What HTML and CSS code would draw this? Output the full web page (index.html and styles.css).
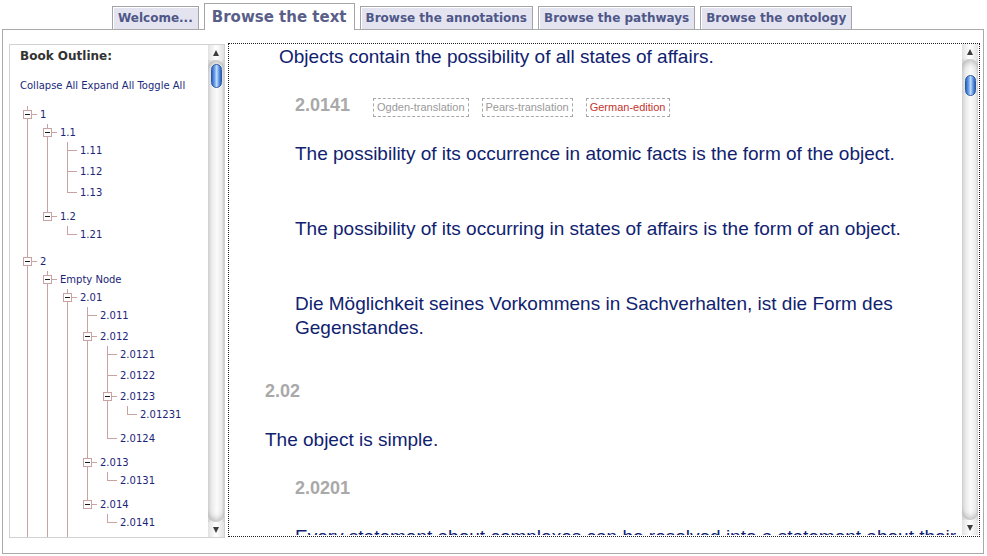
FILE: index.html
```html
<!DOCTYPE html>
<html lang="en">
<head>
<meta charset="utf-8">
<title>Browse the text</title>
<link rel="stylesheet" href="styles.css">
</head>
<body>
<nav class="tabs">
  <a class="tab">Welcome...</a>
  <a class="tab tab-active">Browse the text</a>
  <a class="tab">Browse the annotations</a>
  <a class="tab">Browse the pathways</a>
  <a class="tab">Browse the ontology</a>
</nav>
<main class="frame">
  <aside class="outline">
    <div class="outline-body">
      <div class="outline-title">Book Outline:</div>
      <div class="outline-links"><a>Collapse All</a> <a>Expand All</a> <a>Toggle All</a></div>
      <ul class="tree">
        <li>
          <div class="row"><span class="conn"><span class="toggle"></span></span><a class="label">1</a></div>
          <ul>
            <li>
              <div class="row"><span class="conn"><span class="toggle"></span></span><a class="label">1.1</a></div>
              <ul>
                <li><div class="row"><span class="conn"></span><a class="label">1.11</a></div></li>
                <li><div class="row"><span class="conn"></span><a class="label">1.12</a></div></li>
                <li class="last"><div class="row"><span class="conn"></span><a class="label">1.13</a></div></li>
              </ul>
            </li>
            <li class="last">
              <div class="row"><span class="conn"><span class="toggle"></span></span><a class="label">1.2</a></div>
              <ul>
                <li class="last"><div class="row"><span class="conn"></span><a class="label">1.21</a></div></li>
              </ul>
            </li>
          </ul>
        </li>
        <li>
          <div class="row"><span class="conn"><span class="toggle"></span></span><a class="label">2</a></div>
          <ul>
            <li>
              <div class="row"><span class="conn"><span class="toggle"></span></span><a class="label">Empty Node</a></div>
              <ul>
                <li>
                  <div class="row"><span class="conn"><span class="toggle"></span></span><a class="label">2.01</a></div>
                  <ul>
                    <li><div class="row"><span class="conn"></span><a class="label">2.011</a></div></li>
                    <li>
                      <div class="row"><span class="conn"><span class="toggle"></span></span><a class="label">2.012</a></div>
                      <ul>
                        <li><div class="row"><span class="conn"></span><a class="label">2.0121</a></div></li>
                        <li><div class="row"><span class="conn"></span><a class="label">2.0122</a></div></li>
                        <li>
                          <div class="row"><span class="conn"><span class="toggle"></span></span><a class="label">2.0123</a></div>
                          <ul>
                            <li class="last"><div class="row"><span class="conn"></span><a class="label">2.01231</a></div></li>
                          </ul>
                        </li>
                        <li class="last"><div class="row"><span class="conn"></span><a class="label">2.0124</a></div></li>
                      </ul>
                    </li>
                    <li>
                      <div class="row"><span class="conn"><span class="toggle"></span></span><a class="label">2.013</a></div>
                      <ul>
                        <li class="last"><div class="row"><span class="conn"></span><a class="label">2.0131</a></div></li>
                      </ul>
                    </li>
                    <li class="last">
                      <div class="row"><span class="conn"><span class="toggle"></span></span><a class="label">2.014</a></div>
                      <ul>
                        <li class="last"><div class="row"><span class="conn"></span><a class="label">2.0141</a></div></li>
                      </ul>
                    </li>
                  </ul>
                </li>
              </ul>
            </li>
          </ul>
        </li>
      </ul>
    </div>
    <div class="vscroll">
      <div class="sb-btn sb-up"></div>
      <div class="sb-track"><div class="sb-thumb"></div></div>
      <div class="sb-btn sb-down"></div>
    </div>
  </aside>
  <section class="reader">
    <div class="reader-body">
      <p class="txt cont">Objects contain the possibility of all states of affairs.</p>
      <div class="prop sub has-tr">
        <div class="prop-head">
          <span class="num">2.0141</span>
          <span class="tag">Ogden-translation</span>
          <span class="tag">Pears-translation</span>
          <span class="tag tag-de">German-edition</span>
        </div>
        <p class="txt tr">The possibility of its occurrence in atomic facts is the form of the object.</p>
        <p class="txt tr">The possibility of its occurring in states of affairs is the form of an object.</p>
        <p class="txt tr">Die Möglichkeit seines Vorkommens in Sachverhalten, ist die Form des Gegenstandes.</p>
      </div>
      <div class="prop">
        <div class="prop-head"><span class="num">2.02</span></div>
        <p class="txt">The object is simple.</p>
      </div>
      <div class="prop sub">
        <div class="prop-head"><span class="num">2.0201</span></div>
        <p class="txt">Every statement about complexes can be resolved into a statement about their constituents.</p>
      </div>
    </div>
    <div class="vscroll vscroll-reader">
      <div class="sb-btn sb-up"></div>
      <div class="sb-track"><div class="sb-thumb"></div></div>
      <div class="sb-btn sb-down"></div>
    </div>
  </section>
</main>
</body>
</html>
```

FILE: styles.css
```css
html, body {
  margin: 0;
  padding: 0;
  background: #ffffff;
}

body {
  width: 987px;
  height: 556px;
  overflow: hidden;
  font-family: "DejaVu Sans", Verdana, sans-serif;
}

a {
  text-decoration: none;
  cursor: pointer;
}

/* ---------- tabs ---------- */
.tabs {
  position: relative;
  z-index: 1;
  display: flex;
  align-items: flex-end;
  height: 30px;
  padding-left: 112px;
}

.tab {
  display: flex;
  align-items: center;
  height: 23px;
  box-sizing: border-box;
  margin: 0 5px 1px 0;
  padding: 0 5px;
  border: 1px solid #a4a4a8;
  border-bottom: none;
  background: #e3e4ef;
  box-shadow: inset 1px 1px 0 #ffffff;
  color: #4f5789;
  font-weight: bold;
  font-size: 12px;
  white-space: nowrap;
}

.tab-active {
  height: 27px;
  margin-bottom: 0;
  padding: 0 7px 1px;
  background: #ffffff;
  box-shadow: none;
  color: #5a5f89;
  font-size: 15px;
}

/* ---------- frame ---------- */
.frame {
  display: flex;
  align-items: flex-start;
  box-sizing: border-box;
  width: 982px;
  height: 525px;
  margin: -1px 0 0 2px;
  padding: 13px 3px 0 6px;
  border: 1px solid #a9a9a9;
  background: #ffffff;
}

/* ---------- outline panel ---------- */
.outline {
  display: flex;
  box-sizing: border-box;
  width: 216px;
  height: 494px;
  margin-top: 1px;
  border: 1px solid #d2d2d2;
  background: #ffffff;
}

.outline-body {
  flex: 1;
  min-width: 0;
  overflow: hidden;
  padding-left: 8px;
}

.outline-title {
  margin-top: 3px;
  padding-left: 2px;
  font-size: 12px;
  line-height: 16px;
  font-weight: bold;
  color: #333333;
}

.outline-links {
  margin-top: 15px;
  padding-left: 2px;
  font-size: 10px;
  line-height: 14px;
  color: #1b2a7c;
  white-space: nowrap;
}

/* ---------- tree ---------- */
.tree,
.tree ul {
  list-style: none;
  margin: 0;
  padding: 0;
}

.tree {
  margin-top: 13px;
}

.tree ul {
  margin-left: 20px;
}

.tree li {
  padding-bottom: 3px;
  background: linear-gradient(#cba2a2, #cba2a2) 9px 0 / 1px 100% no-repeat;
}

.tree li.last {
  background-size: 1px 9px;
}

.row {
  display: flex;
  align-items: center;
  height: 18px;
}

.conn {
  flex: none;
  display: flex;
  align-items: flex-start;
  box-sizing: border-box;
  width: 20px;
  height: 18px;
  padding: 4px 0 0 5px;
  background: linear-gradient(#cba2a2, #cba2a2) 9px 8px / 10px 1px no-repeat;
}

.toggle {
  display: flex;
  align-items: center;
  justify-content: center;
  box-sizing: border-box;
  width: 9px;
  height: 9px;
  border: 1px solid #cba2a2;
  background: #ffffff;
}

.toggle::after {
  content: "";
  width: 5px;
  height: 1px;
  background: #1a1a1a;
}

.label {
  padding-left: 2px;
  font-size: 10px;
  line-height: 18px;
  color: #1c2578;
  white-space: nowrap;
}

/* ---------- scrollbars ---------- */
.vscroll {
  flex: none;
  display: flex;
  flex-direction: column;
  width: 16px;
  background: linear-gradient(to right, #d0d0d0, #ececec 25%, #fbfbfb 55%, #ececec 85%, #cfcfcf);
}

.sb-btn {
  flex: none;
  display: flex;
  align-items: center;
  justify-content: center;
  height: 15px;
  background: linear-gradient(to right, #e2e2e2, #ffffff 50%, #e2e2e2);
}

.sb-up::after {
  content: "";
  border-left: 3px solid transparent;
  border-right: 3px solid transparent;
  border-bottom: 6px solid #3d3d3d;
}

.sb-down::after {
  content: "";
  border-left: 3px solid transparent;
  border-right: 3px solid transparent;
  border-top: 6px solid #3d3d3d;
}

.sb-track {
  flex: 1;
  padding-top: 4px;
  border-radius: 8px;
  box-shadow: inset 0 9px 6px -6px rgba(0, 0, 0, 0.22), inset 0 -9px 6px -6px rgba(0, 0, 0, 0.22);
}

.sb-thumb {
  box-sizing: border-box;
  width: 11px;
  height: 24px;
  margin: 0 auto;
  border: 1px solid #2d5aa6;
  border-radius: 6px;
  background: linear-gradient(to right, #2f64c2, #6ea4ea 30%, #c2defc 52%, #5d93e0 78%, #2e5fb6);
}

.vscroll-reader .sb-track {
  padding-top: 16px;
}

.vscroll-reader .sb-thumb {
  height: 21px;
}

/* ---------- reader ---------- */
.reader {
  display: flex;
  box-sizing: border-box;
  flex: 1;
  height: 494px;
  margin-left: 3px;
  border: 1px dotted #222222;
  padding: 0 1px 1px 0;
  background: #ffffff;
}

.reader-body {
  flex: 1;
  min-width: 0;
  overflow: hidden;
  padding: 1px 0 0 36px;
  font-family: "Liberation Sans", Arial, Helvetica, sans-serif;
}

.txt {
  margin: 0;
  font-size: 19px;
  line-height: 24px;
  color: #10226f;
}

.cont {
  padding-left: 14px;
}

.prop {
  margin-top: 24px;
}

.prop.has-tr {
  padding-bottom: 15px;
}

.sub {
  padding-left: 30px;
}

.prop-head {
  display: flex;
  align-items: baseline;
  height: 24px;
  margin-bottom: 25px;
}

.num {
  font-size: 18px;
  line-height: 24px;
  font-weight: bold;
  color: #a9a9a9;
}

.tag {
  box-sizing: border-box;
  height: 19px;
  margin-left: 13px;
  padding: 0 3px;
  border: 1px dashed #a8a8a8;
  font-size: 11px;
  line-height: 17px;
  color: #9a9a9a;
  white-space: nowrap;
}

.num + .tag {
  margin-left: 23px;
}

.tag-de {
  color: #c4332e;
}

.tr + .tr {
  margin-top: 51px;
}
```
